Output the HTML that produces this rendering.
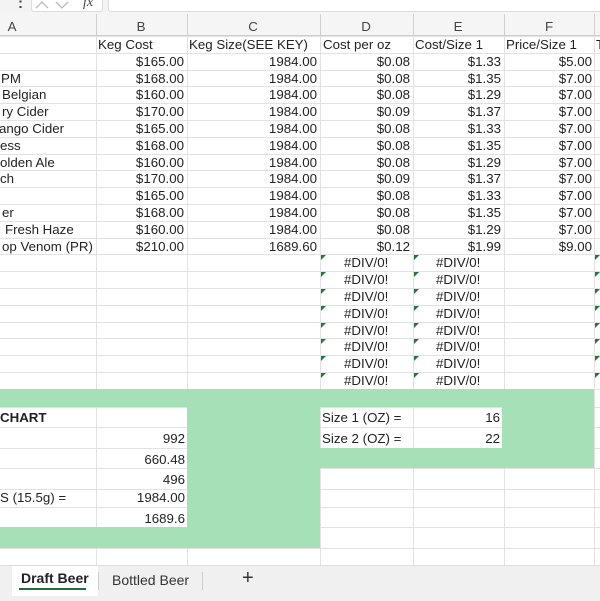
<!DOCTYPE html>
<html><head><meta charset="utf-8"><style>
body{margin:0;width:600px;height:600px;overflow:hidden;background:#fff;font-family:"Liberation Sans",Arial,sans-serif;color:#222;position:relative}
.a{position:absolute;box-sizing:border-box;white-space:nowrap;font-size:13.3px;line-height:16px}
.r{text-align:right}
.g{background:#a6e0b6;position:absolute}
.hl{position:absolute;height:1px;background:#e2e2e2}
.vl{position:absolute;width:1px;background:#e2e2e2}
.tri{position:absolute;width:0;height:0;border-top:5px solid #1e7a35;border-right:5px solid transparent}
</style></head><body>
<div style="position:absolute;left:0;top:0;width:600px;height:12px;background:#f3f3f3"></div>
<div style="position:absolute;left:18px;top:-5px;font-size:15px;font-weight:bold;color:#444">:</div>
<div style="position:absolute;left:31px;top:-4px;width:70px;height:14px;border:1px solid #ddd;background:#fff;border-radius:3px"></div>
<svg style="position:absolute;left:34px;top:0" width="40" height="10"><path d="M2 8 L8 2 L14 8 M22 2 L28 8 L34 2" stroke="#bbb" stroke-width="1.3" fill="none"/></svg>
<div style="position:absolute;left:83px;top:-5px;font-size:14px;font-style:italic;font-family:'Liberation Serif',serif;color:#444">fx</div>
<div style="position:absolute;left:108px;top:-4px;width:500px;height:14px;border:1px solid #ddd;background:#fff;border-radius:3px"></div>
<div style="position:absolute;left:0;top:12px;width:600px;height:24px;background:#f5f5f5;border-bottom:1px solid #cfcfcf;box-sizing:border-box"></div>
<div id="c"></div>
<div style="position:absolute;left:0;top:565px;width:600px;height:35px;background:#f0f0f0;border-top:1px solid #ddd"></div>
<div style="position:absolute;left:12px;top:566px;width:86px;height:30px;background:#fff"></div>
<div style="position:absolute;left:21px;top:570px;font-size:14px;font-weight:bold;color:#222">Draft Beer</div>
<div style="position:absolute;left:19px;top:588px;width:67px;height:2px;background:#1e6e3c"></div>
<div style="position:absolute;left:98px;top:572px;width:1px;height:18px;background:#ccc"></div>
<div style="position:absolute;left:112px;top:572px;font-size:14px;color:#333">Bottled Beer</div>
<div style="position:absolute;left:202px;top:572px;width:1px;height:18px;background:#ccc"></div>
<div style="position:absolute;left:242px;top:567px;font-size:20px;color:#333">+</div>
<script>
var C=document.getElementById('c'),h='';
var X=[0,96,187,320,413,504,594,600];
function t(x,y,w,s,cls,st){h+='<div class="a '+(cls||'')+'" style="left:'+x+'px;top:'+y+'px;width:'+w+'px;'+(st||'')+'">'+s+'</div>';}
var L=['A','B','C','D','E','F'];var cx=[12,141,253,366,458,549];
for(var i=0;i<6;i++)t(cx[i]-10,19,20,L[i],'','text-align:center;color:#444');
for(i=1;i<7;i++)h+='<div class="vl" style="left:'+X[i]+'px;top:14px;height:22px;background:#d0d0d0"></div>';
var rh=16.8,y0=36;
for(i=0;i<=21;i++){var y=Math.round(y0+i*rh);h+='<div class="hl" style="left:0;top:'+y+'px;width:600px"></div>';}
for(i=1;i<7;i++)h+='<div class="vl" style="left:'+X[i]+'px;top:36px;height:353px"></div>';
function ry(n){return Math.round(y0+n*rh)+1;}
t(98,ry(0),90,'Keg Cost');t(189,ry(0),130,'Keg Size(SEE KEY)');t(323,ry(0),90,'Cost per oz');t(415,ry(0),90,'Cost/Size 1');t(506,ry(0),90,'Price/Size 1');t(596,ry(0),20,'T');
var A=['','PM','Belgian','ry Cider','ango Cider','ess','olden Ale','ch','','er','Fresh Haze','op Venom (PR)'];
var Ax=[0,1,2,2,-1,0,0,0,0,2,5,2];
var B=[165,168,160,170,165,168,160,170,165,168,160,210];
var D=['08','08','08','09','08','08','08','09','08','08','08','12'];
var E=['1.33','1.35','1.29','1.37','1.33','1.35','1.29','1.37','1.33','1.35','1.29','1.99'];
for(i=0;i<12;i++){var y=ry(i+1);
t(Ax[i],y,95,A[i]);
t(96,y,88,'$'+B[i]+'.00','r');
t(187,y,130,i==11?'1689.60':'1984.00','r');
t(320,y,90,'$0.'+D[i],'r');
t(413,y,88,'$'+E[i],'r');
t(504,y,88,i==0?'$5.00':(i==11?'$9.00':'$7.00'),'r');}
for(i=12;i<20;i++){var y=ry(i+1);
t(344,y,70,'#DIV/0!');t(436,y,70,'#DIV/0!');
h+='<div class="tri" style="left:321px;top:'+(y)+'px"></div><div class="tri" style="left:414px;top:'+(y)+'px"></div><div class="tri" style="left:595px;top:'+(y)+'px"></div>';}
var Ly=[389,407,427,448,468,489,507,527,548,565];
for(i=0;i<Ly.length;i++)h+='<div class="hl" style="left:0;top:'+Ly[i]+'px;width:600px"></div>';
for(i=1;i<7;i++)h+='<div class="vl" style="left:'+X[i]+'px;top:389px;height:176px"></div>';
h+='<div class="g" style="left:0;top:389px;width:594px;height:18px"></div>';
h+='<div class="g" style="left:187px;top:407px;width:133px;height:141px"></div>';
h+='<div class="g" style="left:0;top:527px;width:320px;height:21px"></div>';
h+='<div class="g" style="left:502px;top:407px;width:92px;height:41px"></div>';
h+='<div class="g" style="left:320px;top:448px;width:274px;height:20px"></div>';
t(0,410,95,'CHART','','font-weight:bold');
t(96,431,89,'992','r');t(96,452,89,'660.48','r');t(96,472,89,'496','r');
t(0,490,95,'S (15.5g) =');t(96,490,89,'1984.00','r');t(96,511,89,'1689.6','r');
t(322,410,90,'Size 1 (OZ) =');t(411,410,89,'16','r');
t(322,431,90,'Size 2 (OZ) =');t(411,431,89,'22','r');
C.innerHTML=h;
</script>
</body></html>
